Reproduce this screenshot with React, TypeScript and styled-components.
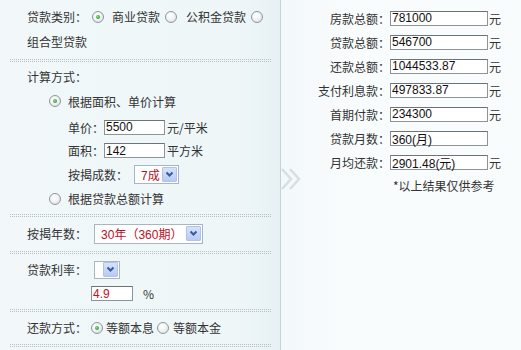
import React from 'react';
import styled, { createGlobalStyle } from 'styled-components';

const GlobalStyle = createGlobalStyle`
  html, body {
    margin: 0;
    padding: 0;
    background: #f8fbfc;
  }
  body {
    font-family: "Noto Sans CJK SC", "Liberation Sans", sans-serif;
    font-size: 12px;
    color: #333;
  }
`;

const Page = styled.div`
  display: flex;
  width: 521px;
  height: 350px;
  overflow: hidden;
`;

const LeftPanel = styled.div`
  position: relative;
  width: 280px;
  padding-top: 4px;
  background: linear-gradient(to right, #f2f8fa 0%, #eef6f8 85%, #e7f1f4 100%);
  border-right: 1px solid #c4d3d8;
`;

const RightPanel = styled.div`
  position: relative;
  flex: 1;
  padding-top: 6px;
  background: linear-gradient(to right, #f3f8fa 0%, #f9fcfd 30%);
`;

const Row = styled.div<{ $h: number; $indent?: number; $mt?: number }>`
  display: flex;
  align-items: center;
  height: ${({ $h }) => $h}px;
  margin-top: ${({ $mt }) => $mt ?? 0}px;
  padding-left: ${({ $indent }) => $indent ?? 27}px;
  white-space: nowrap;
`;

const Divider = styled.div<{ $mt: number; $mb: number }>`
  height: 1px;
  margin: ${({ $mt }) => $mt}px 9px ${({ $mb }) => $mb}px 10px;
  border-top: 1px dotted #b3c1c6;
  border-bottom: 1px dotted #b3c1c6;
`;

const Label = styled.span`
  color: #333;
`;

const Gap = styled.span<{ $w: number }>`
  display: inline-block;
  width: ${({ $w }) => $w}px;
`;

const RadioCircle = styled.span<{ $checked?: boolean; $ml?: number; $mr?: number }>`
  position: relative;
  display: inline-block;
  box-sizing: border-box;
  width: 12px;
  height: 12px;
  margin-left: ${({ $ml }) => $ml ?? 0}px;
  margin-right: ${({ $mr }) => $mr ?? 0}px;
  border: 1px solid #8b97a0;
  border-radius: 50%;
  background: radial-gradient(circle at 40% 35%, #ffffff 0%, #f2f3f3 45%, #d5d8da 100%);

  &::after {
    content: '';
    display: ${({ $checked }) => ($checked ? 'block' : 'none')};
    position: absolute;
    left: 3px;
    top: 3px;
    width: 4px;
    height: 4px;
    border-radius: 50%;
    background: radial-gradient(circle at 40% 40%, #8fdc7f 0%, #33a043 70%, #2a8a35 100%);
  }
`;

const TextInput = styled.span<{ $w: number; $red?: boolean }>`
  display: inline-flex;
  align-items: center;
  box-sizing: border-box;
  width: ${({ $w }) => $w}px;
  height: 15px;
  padding-left: 1px;
  background: #fff;
  border: 1px solid #8d9499;
  border-top-color: #6d7479;
  font-family: "Liberation Sans", "Noto Sans CJK SC", sans-serif;
  font-size: 12px;
  color: ${({ $red }) => ($red ? '#c0102a' : '#111')};
`;

const Unit = styled.span<{ $ml?: number }>`
  margin-left: ${({ $ml }) => $ml ?? 2}px;
`;

const SelectBox = styled.span<{ $w: number; $h: number }>`
  display: inline-flex;
  align-items: center;
  justify-content: space-between;
  box-sizing: border-box;
  width: ${({ $w }) => $w}px;
  height: ${({ $h }) => $h}px;
  padding: 0 1px 0 6px;
  background: #fff;
  border: 1px solid #a8b6c2;
  color: #b5101f;
  font-size: 12px;
`;

const SelectArrow = styled.span`
  display: inline-flex;
  align-items: center;
  justify-content: center;
  box-sizing: border-box;
  width: 15px;
  height: 15px;
  background: linear-gradient(#d6e2fb, #b7cbf3);
  border: 1px solid #b1c3ea;
  border-radius: 1px;
`;

const Digits = styled.span`
  font-family: "Liberation Sans", sans-serif;
`;

const ResultRow = styled.div`
  display: flex;
  align-items: center;
  height: 24px;
`;

const ResultLabel = styled.span`
  width: 109px;
  text-align: right;
  color: #333;
`;

const Note = styled.div`
  height: 24px;
  line-height: 24px;
  padding-left: 112px;
  color: #333;
`;

const Chevrons = styled.svg`
  position: absolute;
  left: -1px;
  top: 167px;
`;

const ArrowDown = () => (
  <svg width="9" height="7" viewBox="0 0 9 7">
    <polyline points="1.5,1.5 4.5,4.5 7.5,1.5" fill="none" stroke="#3a5a9a" strokeWidth="2" />
  </svg>
);

const Select: React.FC<{ w: number; h: number; children?: React.ReactNode }> = ({ w, h, children }) => (
  <SelectBox $w={w} $h={h}>
    <span>{children}</span>
    <SelectArrow>
      <ArrowDown />
    </SelectArrow>
  </SelectBox>
);

const results: { label: string; value: string; unit?: boolean }[] = [
  { label: '房款总额：', value: '781000', unit: true },
  { label: '贷款总额：', value: '546700', unit: true },
  { label: '还款总额：', value: '1044533.87', unit: true },
  { label: '支付利息款：', value: '497833.87', unit: true },
  { label: '首期付款：', value: '234300', unit: true },
  { label: '贷款月数：', value: '360(月)' },
  { label: '月均还款：', value: '2901.48(元)', unit: true },
];

export default function App() {
  return (
    <Page>
      <GlobalStyle />
      <LeftPanel>
        <Row $h={25}>
          <Label>贷款类别：</Label>
          <RadioCircle $checked $ml={5} $mr={8} />
          <Label>商业贷款</Label>
          <RadioCircle $ml={5} $mr={9} />
          <Label>公积金贷款</Label>
          <RadioCircle $ml={5} />
        </Row>
        <Row $h={25}>
          <Label>组合型贷款</Label>
        </Row>
        <Divider $mt={5} $mb={2} />

        <Row $h={25}>
          <Label>计算方式：</Label>
        </Row>
        <Row $h={24} $indent={49}>
          <RadioCircle $checked $mr={7} />
          <Label>根据面积、单价计算</Label>
        </Row>
        <Row $h={24} $indent={68} $mt={2}>
          <Label>单价：</Label>
          <TextInput $w={61}>5500</TextInput>
          <Unit>元/平米</Unit>
        </Row>
        <Row $h={23} $indent={68}>
          <Label>面积：</Label>
          <TextInput $w={61}>142</TextInput>
          <Unit>平方米</Unit>
        </Row>
        <Row $h={25} $indent={68}>
          <Label>按揭成数：</Label>
          <Gap $w={6} />
          <Select w={45} h={19}>
            <Digits>7</Digits>成
          </Select>
        </Row>
        <Row $h={23} $indent={49}>
          <RadioCircle $mr={7} />
          <Label>根据贷款总额计算</Label>
        </Row>
        <Divider $mt={4} $mb={4} />

        <Row $h={25}>
          <Label>按揭年数：</Label>
          <Gap $w={7} />
          <Select w={109} h={20}>
            <Digits>30</Digits>年（<Digits>360</Digits>期）
          </Select>
        </Row>
        <Divider $mt={5} $mb={3} />

        <Row $h={25}>
          <Label>贷款利率：</Label>
          <Gap $w={7} />
          <Select w={26} h={18} />
        </Row>
        <Row $h={23} $indent={91}>
          <TextInput $w={42} $red>4.9</TextInput>
          <Unit $ml={10}>%</Unit>
        </Row>
        <Divider $mt={4} $mb={3} />

        <Row $h={25}>
          <Label>还款方式：</Label>
          <RadioCircle $checked $ml={4} $mr={3} />
          <Label>等额本息</Label>
          <RadioCircle $ml={3} $mr={4} />
          <Label>等额本金</Label>
        </Row>
        <Divider $mt={4} $mb={0} />
      </LeftPanel>

      <RightPanel>
        <Chevrons width="24" height="24" viewBox="0 0 24 24">
          <polyline points="2,2 11,12 2,22" fill="none" stroke="#d8dfe2" strokeWidth="2.5" />
          <polyline points="10,2 19,12 10,22" fill="none" stroke="#d8dfe2" strokeWidth="2.5" />
        </Chevrons>
        {results.map((r) => (
          <ResultRow key={r.label}>
            <ResultLabel>{r.label}</ResultLabel>
            <TextInput $w={98}>{r.value}</TextInput>
            {r.unit && <Unit $ml={1}>元</Unit>}
          </ResultRow>
        ))}
        <Note>*以上结果仅供参考</Note>
      </RightPanel>
    </Page>
  );
}
